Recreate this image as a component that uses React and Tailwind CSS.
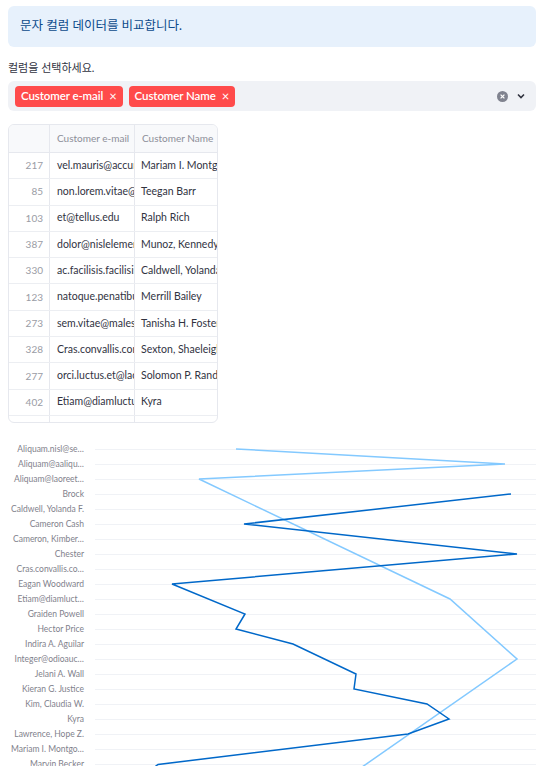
const rows = [
  ["217", "vel.mauris@accumsan.com", "Mariam I. Montgomery"],
  ["85", "non.lorem.vitae@nec.org", "Teegan Barr"],
  ["103", "et@tellus.edu", "Ralph Rich"],
  ["387", "dolor@nislelementum.ca", "Munoz, Kennedy R."],
  ["330", "ac.facilisis.facilisis@ut.com", "Caldwell, Yolanda F."],
  ["123", "natoque.penatibus@et.net", "Merrill Bailey"],
  ["273", "sem.vitae@malesuada.org", "Tanisha H. Foster"],
  ["328", "Cras.convallis.convallis@a.ca", "Sexton, Shaeleigh"],
  ["277", "orci.luctus.et@lacus.edu", "Solomon P. Randolph"],
  ["402", "Etiam@diamluctus.com", "Kyra"],
];

const labels = [
  "Aliquam.nisl@se…",
  "Aliquam@aaliqu…",
  "Aliquam@laoreet…",
  "Brock",
  "Caldwell, Yolanda F.",
  "Cameron Cash",
  "Cameron, Kimber…",
  "Chester",
  "Cras.convallis.co…",
  "Eagan Woodward",
  "Etiam@diamluct…",
  "Graiden Powell",
  "Hector Price",
  "Indira A. Aguilar",
  "Integer@odioauc…",
  "Jelani A. Wall",
  "Kieran G. Justice",
  "Kim, Claudia W.",
  "Kyra",
  "Lawrence, Hope Z.",
  "Mariam I. Montgo…",
  "Marvin Becker",
];

const emailLine = "141,7 410,22 104,37 355,157 422,217 247,339";
const nameLine =
  "416,52 149,82 422,112 77,142 150,172 141,187 198,202 261,232 259,247 332,262 354,277 313,292 63,322.5 40,340";

const font = { fontFamily: "Lato, 'Noto Sans CJK KR', sans-serif" };

function Tag({ label }) {
  return (
    <div className="h-[21px] flex items-center gap-[6px] bg-[#ff4b4b] rounded-[4px] pl-[6px] pr-[6px] text-white text-[11.5px] font-semibold tracking-[-0.1px]">
      <span>{label}</span>
      <span className="text-[13px] font-normal leading-none">×</span>
    </div>
  );
}

export default function App() {
  return (
    <div className="bg-white min-h-screen text-[#31333f] overflow-hidden" style={font}>
      <div className="ml-2 w-[528px] pt-[6px]">
        {/* Info */}
        <div className="h-[41px] rounded-[6px] bg-[#e7f1fc] flex items-center px-3 text-[12.5px] text-[#0b4a8b]">
          문자 컬럼 데이터를 비교합니다.
        </div>

        {/* Multiselect */}
        <div className="mt-[14px] text-[11px] leading-[14px]">컬럼을 선택하세요.</div>
        <div className="mt-[6px] h-[30px] rounded-[6px] bg-[#f0f2f6] flex items-center pl-[7px] pr-[10px]">
          <div className="flex gap-[6px]">
            <Tag label="Customer e-mail" />
            <Tag label="Customer Name" />
          </div>
          <div className="ml-auto flex items-center gap-[8px]">
            <svg width="11" height="11" viewBox="0 0 11 11">
              <circle cx="5.5" cy="5.5" r="5.5" fill="#80838f" />
              <path d="M3.6 3.6 L7.4 7.4 M7.4 3.6 L3.6 7.4" stroke="#fff" strokeWidth="1.2" />
            </svg>
            <svg width="10" height="10" viewBox="0 0 10 10">
              <path d="M2 3.5 L5 6.5 L8 3.5" stroke="#31333f" strokeWidth="1.6" fill="none" />
            </svg>
          </div>
        </div>

        {/* Table */}
        <div className="mt-[13px] w-[210px] h-[299px] border border-[#e6e8ee] rounded-[6px] overflow-hidden text-[10.5px]">
          <div className="flex h-[28px] bg-[#f8f9fb] border-b border-[#e6e8ee] text-[#8d8f99] text-[10px]">
            <div className="w-[41px] border-r border-[#e6e8ee]" />
            <div className="w-[85px] border-r border-[#e6e8ee] px-[7px] flex items-center whitespace-nowrap overflow-hidden">
              Customer e-mail
            </div>
            <div className="flex-1 px-[7px] flex items-center whitespace-nowrap overflow-hidden">Customer Name</div>
          </div>
          {rows.map((r) => (
            <div key={r[0]} className="flex h-[26.3px] border-b border-[#eceef2]">
              <div className="w-[41px] border-r border-[#e6e8ee] flex items-center justify-end pr-[6px] text-[#9a9ca5] text-[10px]">
                {r[0]}
              </div>
              <div className="w-[85px] border-r border-[#e6e8ee] pl-[7px] flex items-center whitespace-nowrap overflow-hidden">
                {r[1]}
              </div>
              <div className="flex-1 pl-[6px] flex items-center whitespace-nowrap overflow-hidden">{r[2]}</div>
            </div>
          ))}
          <div className="flex h-[12px]">
            <div className="w-[41px] border-r border-[#e6e8ee]" />
            <div className="w-[85px] border-r border-[#e6e8ee]" />
          </div>
        </div>

        {/* Chart */}
        <div className="mt-[19px] flex">
          <div className="w-[76px] shrink-0 text-right text-[8.5px] text-[#7f818c]">
            {labels.map((l) => (
              <div key={l} className="h-[15px] leading-[15px] whitespace-nowrap">
                {l}
              </div>
            ))}
          </div>
          <svg width="441" height="330" className="ml-[11px] shrink-0">
            {labels.map((l, i) => (
              <line key={l} x1="0" x2="441" y1={7.5 + 15 * i} y2={7.5 + 15 * i} stroke="#f0f2f6" strokeWidth="1" />
            ))}
            <polyline points={emailLine} fill="none" stroke="#83c9ff" strokeWidth="1.5" />
            <polyline points={nameLine} fill="none" stroke="#0068c9" strokeWidth="1.5" />
          </svg>
        </div>
      </div>
    </div>
  );
}
